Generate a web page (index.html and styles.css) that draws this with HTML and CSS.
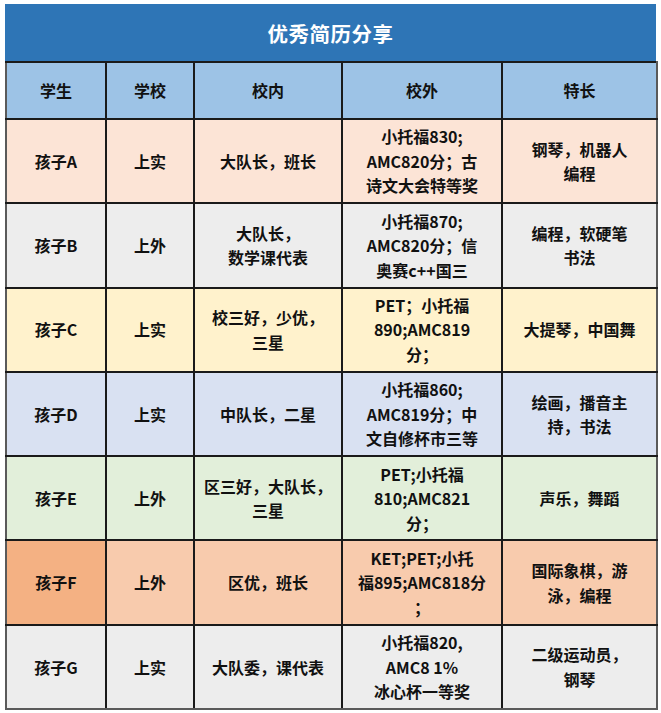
FILE: index.html
```html
<!DOCTYPE html>
<html lang="zh">
<head>
<meta charset="utf-8">
<title>优秀简历分享</title>
<link rel="stylesheet" href="styles.css">
</head>
<body>
<div class="sheet">
  <div class="title">优秀简历分享</div>
  <table class="grid">
    <colgroup>
      <col class="c1"><col class="c2"><col class="c3"><col class="c4"><col class="c5">
    </colgroup>
    <thead>
      <tr class="head"><th>学生</th><th>学校</th><th>校内</th><th>校外</th><th>特长</th></tr>
    </thead>
    <tbody>
      <tr class="r-a"><td>孩子A</td><td>上实</td><td>大队长，班长</td><td>小托福830;<br>AMC820分；古<br>诗文大会特等奖</td><td>钢琴，机器人<br>编程</td></tr>
      <tr class="r-b"><td>孩子B</td><td>上外</td><td>大队长，<br>数学课代表</td><td>小托福870;<br>AMC820分；信<br>奥赛c++国三</td><td>编程，软硬笔<br>书法</td></tr>
      <tr class="r-c"><td>孩子C</td><td>上实</td><td>校三好，少优，<br>三星</td><td>PET；小托福<br>890;AMC819<br>分；</td><td>大提琴，中国舞</td></tr>
      <tr class="r-d"><td>孩子D</td><td>上实</td><td>中队长，二星</td><td>小托福860;<br>AMC819分；中<br>文自修杯市三等</td><td>绘画，播音主<br>持，书法</td></tr>
      <tr class="r-e"><td>孩子E</td><td>上外</td><td>区三好，大队长，<br>三星</td><td>PET;小托福<br>810;AMC821<br>分；</td><td>声乐，舞蹈</td></tr>
      <tr class="r-f"><td class="first">孩子F</td><td>上外</td><td>区优，班长</td><td>KET;PET;小托<br>福895;AMC818分<br>；</td><td>国际象棋，游<br>泳，编程</td></tr>
      <tr class="r-g"><td>孩子G</td><td>上实</td><td>大队委，课代表</td><td>小托福820,<br>AMC8 1%<br>冰心杯一等奖</td><td>二级运动员，<br>钢琴</td></tr>
    </tbody>
  </table>
</div>
</body>
</html>
```
FILE: styles.css
```css
html, body {
  margin: 0;
  padding: 0;
  background: #ffffff;
}
body {
  padding: 4px 5px 0 5px;
  font-family: "Noto Sans CJK SC", "Noto Sans", sans-serif;
  color: #111111;
}
.sheet {
  width: 651px;
}
.title {
  height: 57px;
  background: #2e75b6;
  color: #ffffff;
  font-size: 20.5px;
  font-weight: 700;
  display: flex;
  align-items: center;
  justify-content: center;
  letter-spacing: 0.5px;
}
.grid {
  width: 651px;
  table-layout: fixed;
  border-collapse: collapse;
  border: 2px solid #5a5a5a;
  border-top: 2px solid #1a1a1a;
}
.c1 { width: 100px; }
.c2 { width: 88px; }
.c3 { width: 148px; }
.c4 { width: 160px; }
.c5 { width: 155px; }
.grid th,
.grid td {
  border: 2px solid #1a1a1a;
  text-align: center;
  vertical-align: middle;
  font-size: 16px;
  font-weight: 700;
  line-height: 24.5px;
  padding: 0;
  white-space: nowrap;
}
.grid tr > :first-child { border-left-color: #5a5a5a; }
.grid tr > :last-child { border-right-color: #5a5a5a; }
.grid tbody tr:last-child td { border-bottom-color: #5a5a5a; }
.head th {
  height: 55px;
  background: #9dc3e6;
}
.grid tbody td {
  height: 82.3px;
}
.r-a td { background: #fce4d6; }
.r-b td { background: #ededed; }
.r-c td { background: #fff2cc; }
.r-d td { background: #d9e1f2; }
.r-e td { background: #e2efda; }
.r-f td { background: #f8cbad; }
.r-f td.first { background: #f4b183; }
.r-g td { background: #ededed; }
```
